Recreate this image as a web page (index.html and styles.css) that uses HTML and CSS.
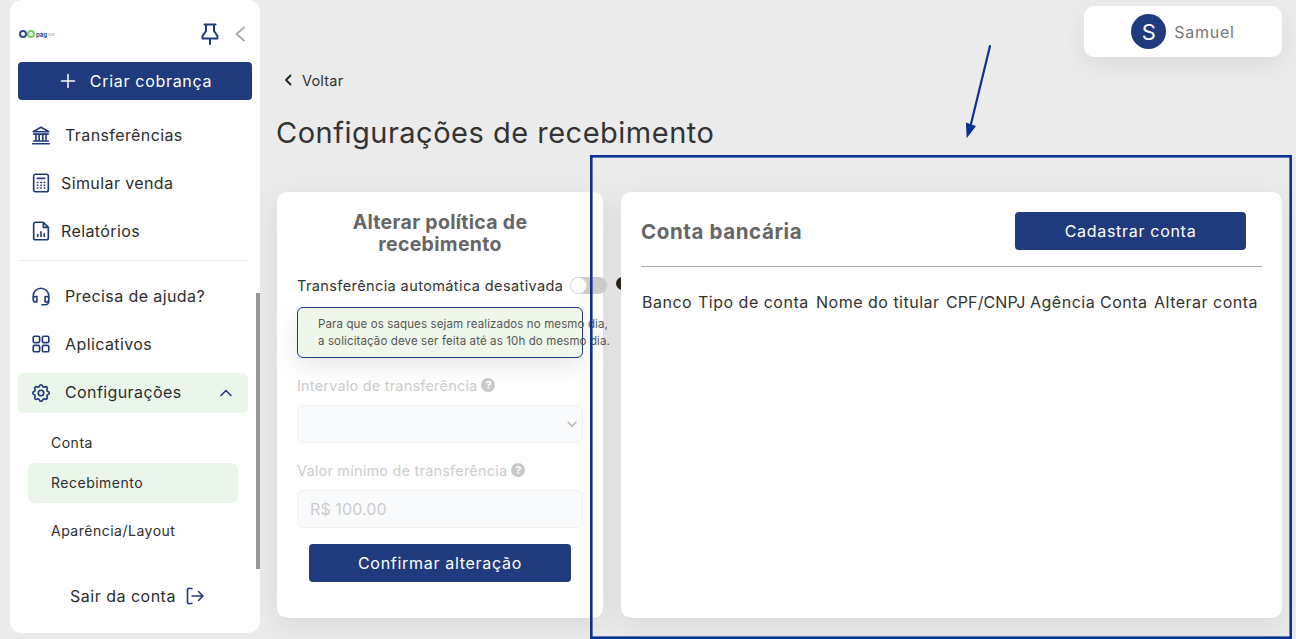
FILE: index.html
```html
<!DOCTYPE html>
<html lang="pt-BR">
<head>
    <meta charset="UTF-8">
    <meta name="viewport" content="width=device-width, initial-scale=1.0">
    <title>Configurações de recebimento</title>
    <link rel="stylesheet" href="styles.css">
</head>
<body>
    <div class="page">
        <aside class="sidebar">
            <div class="side-top">
                <div class="logo"><span class="logo-go"></span><span class="logo-go green"></span><span class="logo-text">pag</span><span class="logo-line"></span></div>
                <svg class="pin" viewBox="0 0 18 22" width="18" height="22"><path d="M3.500 1.500h11M5 1.500v6.500L1.500 13v2.500h15V13L13 8V1.500M9 15.500V21" /></svg>
                <svg class="collapse" viewBox="0 0 12 16" width="12" height="16"><path d="M11 1.500L3.500 8l7.500 6.500" /></svg>
            </div>
            <button class="btn create-btn" type="button">
                <svg viewBox="0 0 16 16" width="16" height="16"><path d="M8 1.500v13M1.500 8h13" /></svg>
                Criar cobrança
            </button>
            <nav class="side-nav">
                <a class="nav-item">
                    <svg class="nav-icon" viewBox="0 0 24 24"><path d="M3.500 8.500L12 3.500l8.500 5zM4 11h16M6.500 11v7M10 11v7M14 11v7M17.500 11v7M4 18.500h16M3 21.500h18" /></svg>
                    <span>Transferências</span>
                </a>
                <a class="nav-item">
                    <svg class="nav-icon tight" viewBox="0 0 24 24"><rect x="4" y="2.500" width="16" height="19" rx="2" /><path d="M8 7h8M8 11.500h.5M11.800 11.500h.5M15.500 11.500h.5M8 14.500h.5M11.800 14.500h.5M15.500 14.500h.5M8 17.500h.5M11.800 17.500h.5M15.500 17.500h.5" /></svg>
                    <span>Simular venda</span>
                </a>
                <a class="nav-item">
                    <svg class="nav-icon tight" viewBox="0 0 24 24"><path d="M14.500 2.500H6a2 2 0 0 0-2 2v15a2 2 0 0 0 2 2h12a2 2 0 0 0 2-2V8zM14.500 2.500V8H20M8.500 18v-2M12 18v-5M15.500 18v-3" /></svg>
                    <span>Relatórios</span>
                </a>
                <hr class="side-line">
                <a class="nav-item">
                    <svg class="nav-icon" viewBox="0 0 24 24"><path d="M3.500 15v-3a8.500 8.500 0 0 1 17 0v3M3.500 15a2.500 2.500 0 0 1 2.500-2.500h1.500v6H6A2.500 2.500 0 0 1 3.500 16zM20.500 15a2.500 2.500 0 0 0-2.500-2.500h-1.500v6H18a2.500 2.500 0 0 0 2.500-2.500zM20.500 16v2a3.500 3.500 0 0 1-3.500 3.500h-4" /></svg>
                    <span>Precisa de ajuda?</span>
                </a>
                <a class="nav-item">
                    <svg class="nav-icon" viewBox="0 0 24 24"><rect x="3.500" y="3.500" width="7" height="7" rx="1.500" /><rect x="13.500" y="3.500" width="7" height="7" rx="1.500" /><rect x="3.500" y="13.500" width="7" height="7" rx="1.500" /><rect x="13.500" y="13.500" width="7" height="7" rx="1.500" /></svg>
                    <span>Aplicativos</span>
                </a>
                <a class="nav-item nav-open">
                    <svg class="nav-icon" viewBox="0 0 24 24"><path d="M10.325 4.317c.426 -1.756 2.924 -1.756 3.35 0a1.724 1.724 0 0 0 2.573 1.066c1.543 -.94 3.31 .826 2.37 2.37a1.724 1.724 0 0 0 1.065 2.572c1.756 .426 1.756 2.924 0 3.35a1.724 1.724 0 0 0 -1.066 2.573c.94 1.543 -.826 3.31 -2.37 2.37a1.724 1.724 0 0 0 -2.572 1.065c-.426 1.756 -2.924 1.756 -3.35 0a1.724 1.724 0 0 0 -2.573 -1.066c-1.543 .94 -3.31 -.826 -2.37 -2.37a1.724 1.724 0 0 0 -1.065 -2.572c-1.756 -.426 -1.756 -2.924 0 -3.35a1.724 1.724 0 0 0 1.066 -2.573c-.94 -1.543 .826 -3.31 2.37 -2.37c1 .608 2.296 .07 2.572 -1.065z" /><circle cx="12" cy="12" r="3" /></svg>
                    <span>Configurações</span>
                    <svg class="open-arrow" viewBox="0 0 14 10" width="14" height="10"><path d="M2 7.500l5-5 5 5" /></svg>
                </a>
                <div class="sub-nav">
                    <a class="sub-item">Conta</a>
                    <a class="sub-item active">Recebimento</a>
                    <a class="sub-item last">Aparência/Layout</a>
                </div>
            </nav>
            <a class="logout">
                Sair da conta
                <svg viewBox="0 0 20 20" width="20" height="20"><path d="M7 2.500H3.500a1 1 0 0 0-1 1v13a1 1 0 0 0 1 1H7M7 10h11M13.500 5.500L18 10l-4.500 4.500" /></svg>
            </a>
            <div class="side-scroll"></div>
        </aside>

        <main class="content">
            <div class="top-bar">
                <div class="user-card">
                    <span class="avatar">S</span>
                    <span class="user-name">Samuel</span>
                </div>
            </div>
            <a class="back">
                <svg viewBox="0 0 10 12" width="10" height="12"><path d="M7.500 1.500L3 6l4.500 4.500" /></svg>
                Voltar
            </a>
            <h1 class="page-title">Configurações de recebimento</h1>

            <div class="cards">
                <section class="card policy-card">
                    <h2 class="policy-title">Alterar política de recebimento</h2>
                    <div class="toggle-row">
                        <span>Transferência automática desativada</span>
                        <span class="toggle"><span class="knob"></span></span>
                        <span class="dark-dot"></span>
                    </div>
                    <div class="notice">
                        <p>Para que os saques sejam realizados no mesmo dia,</p>
                        <p>a solicitação deve ser feita até as 10h do mesmo dia.</p>
                    </div>
                    <label class="field-label">Intervalo de transferência <span class="help">?</span></label>
                    <div class="fake-field">
                        <svg viewBox="0 0 12 8" width="10" height="7"><path d="M1.500 1.500L6 6l4.500-4.500" /></svg>
                    </div>
                    <label class="field-label">Valor mínimo de transferência <span class="help">?</span></label>
                    <div class="fake-field">R$ 100.00</div>
                    <button class="btn confirm-btn" type="button">Confirmar alteração</button>
                </section>

                <section class="card bank-card">
                    <div class="bank-head">
                        <h2 class="bank-title">Conta bancária</h2>
                        <button class="btn add-btn" type="button">Cadastrar conta</button>
                    </div>
                    <div class="bank-cols">
                        <span>Banco</span>
                        <span>Tipo de conta</span>
                        <span>Nome do titular</span>
                        <span class="col-doc">CPF/CNPJ</span>
                        <span>Agência</span>
                        <span>Conta</span>
                        <span>Alterar conta</span>
                    </div>
                </section>
            </div>
        </main>
    </div>

    <!-- marcação por cima da captura -->
    <svg class="mark" viewBox="0 0 1296 639" width="1296" height="639">
        <rect x="591.300" y="156.300" width="699.400" height="481.400" />
        <path class="shaft" d="M990 46L971 124" />
        <path class="head" d="M966.700 138.300L965.900 122.600L976 126z" />
    </svg>
</body>
</html>
```

FILE: styles.css
```css
* {
    box-sizing: border-box;
}
body {
    margin: 0;
    height: 639px;
    overflow: hidden;
    background-color: #ebebeb;
    font-family: Inter, "Open Sans", sans-serif;
    color: #333;
}
p, h1, h2 {
    margin: 0;
}
svg path, svg rect, svg circle {
    fill: none;
    stroke-linecap: round;
    stroke-linejoin: round;
}
.page {
    display: flex;
    height: 639px;
}

/* sidebar */
.sidebar {
    position: relative;
    flex: none;
    width: 250px;
    height: 633px;
    margin-left: 10px;
    padding: 0 8px;
    background-color: #fff;
    border-radius: 12px;
}
.side-top {
    display: flex;
    align-items: center;
    height: 62px;
    padding: 6px 0 0 1px;
}
.logo {
    display: flex;
    align-items: center;
    width: 182px;
}
.logo-go {
    width: 8px;
    height: 8px;
    border: 2px solid #2f4b8f;
    border-radius: 50%;
}
.logo-go.green {
    border-color: #6fcf5f;
    margin-right: 1px;
}
.logo-text {
    font-size: 6px;
    font-weight: 700;
    color: #2f4b8f;
    margin-right: 1px;
}
.logo-line {
    width: 7px;
    height: 3px;
    background-color: #d5d8e2;
}
.pin path {
    stroke: #1f3a7d;
    stroke-width: 2;
}
.collapse {
    margin-left: 14px;
}
.collapse path {
    stroke: #aaa;
    stroke-width: 1.800;
}
.btn {
    display: flex;
    align-items: center;
    justify-content: center;
    height: 38px;
    border: none;
    border-radius: 4px;
    background-color: #1f3a7d;
    color: #fff;
    font-family: inherit;
    font-size: 16px;
    letter-spacing: 0.7px;
    cursor: pointer;
}
.create-btn {
    width: 234px;
    gap: 14px;
    padding-left: 8px;
}
.create-btn path {
    stroke: #fff;
    stroke-width: 1.500;
}
.side-nav {
    width: 230px;
    margin-top: 11px;
}
.nav-item {
    display: flex;
    align-items: center;
    height: 48px;
    padding-left: 12px;
    font-size: 16px;
    letter-spacing: 0.4px;
    color: #2d2d2d;
}
.nav-icon {
    flex: none;
    width: 22px;
    height: 22px;
    margin-right: 13px;
}
.nav-icon.tight {
    margin-right: 9px;
}
.nav-icon path, .nav-icon rect, .nav-icon circle {
    stroke: #1f3a7d;
    stroke-width: 1.800;
}
.side-line {
    height: 1px;
    margin: 5px 0 11px;
    border: none;
    background-color: #ececec;
}
.nav-open {
    position: relative;
    height: 40px;
    margin-top: 5px;
    padding-bottom: 2px;
    border-radius: 6px;
    background-color: #ebf6ea;
}
.nav-open .nav-icon {
    margin-bottom: -2px;
}
.open-arrow {
    position: absolute;
    right: 15px;
    top: 15px;
}
.open-arrow path {
    stroke: #1f3a7d;
    stroke-width: 1.500;
}
.sub-nav {
    padding: 10px 10px 0;
}
.sub-item {
    display: flex;
    align-items: center;
    height: 40px;
    padding: 0 0 2px 23px;
    font-size: 14px;
    letter-spacing: 0.5px;
    color: #2d2d2d;
    border-radius: 6px;
}
.sub-item.active {
    background-color: #ebf6ea;
}
.sub-item.last {
    margin-top: 8px;
}
.logout {
    position: absolute;
    left: 60px;
    top: 586px;
    display: flex;
    align-items: center;
    gap: 9px;
    font-size: 16px;
    letter-spacing: 0.5px;
    color: #2d2d2d;
}
.logout path {
    stroke: #1f3a7d;
    stroke-width: 1.600;
}
.side-scroll {
    position: absolute;
    right: 0;
    top: 293px;
    width: 4px;
    height: 276px;
    background-color: #999;
}

/* conteudo */
.content {
    flex: 1;
    min-width: 0;
    padding: 0 14px 0 16px;
}
.top-bar {
    display: flex;
    justify-content: flex-end;
    padding-top: 6px;
}
.user-card {
    display: flex;
    align-items: center;
    justify-content: center;
    gap: 8px;
    width: 198px;
    height: 51px;
    background-color: #fff;
    border-radius: 10px;
    box-shadow: 0 8px 24px rgba(0,0,0,0.07);
}
.avatar {
    display: flex;
    align-items: center;
    justify-content: center;
    width: 35px;
    height: 35px;
    border-radius: 50%;
    background-color: #1f3a7d;
    color: #fff;
    font-size: 22px;
}
.user-name {
    font-size: 16px;
    letter-spacing: 0.75px;
    color: #777;
}
.back {
    display: flex;
    align-items: center;
    gap: 9px;
    height: 20px;
    margin: 13px 0 0 7px;
    font-size: 14.500px;
    letter-spacing: 0.2px;
    color: #333;
}
.back path {
    stroke: #222;
    stroke-width: 1.800;
}
.page-title {
    height: 42px;
    margin-top: 22px;
    font-size: 29px;
    font-weight: 400;
    line-height: 42px;
    letter-spacing: 0.5px;
    color: #333;
}
.cards {
    display: flex;
    gap: 18px;
    height: 426px;
    margin: 38px 0 0 1px;
}
.card {
    position: relative;
    background-color: #fff;
    border-radius: 10px;
    box-shadow: 0 8px 30px rgba(0,0,0,0.08);
}

/* politica */
.policy-card {
    flex: none;
    width: 326px;
    padding: 19px 20px 0;
}
.policy-title {
    width: 260px;
    margin: 0 auto;
    font-size: 19.500px;
    font-weight: 700;
    line-height: 22px;
    letter-spacing: 0.3px;
    text-align: center;
    color: #666;
}
.toggle-row {
    display: flex;
    align-items: center;
    height: 20px;
    margin-top: 21px;
    padding-bottom: 2px;
    font-size: 14.500px;
    letter-spacing: 0.4px;
    white-space: nowrap;
    color: #333;
}
.toggle {
    flex: none;
    display: block;
    width: 37px;
    height: 17px;
    margin-left: auto;
    margin-right: -26px;
    border-radius: 9px;
    background-color: #ccc;
}
.knob {
    display: block;
    width: 17px;
    height: 17px;
    border: 1px solid #ddd;
    border-radius: 50%;
    background-color: #fff;
}
.dark-dot {
    flex: none;
    width: 13px;
    height: 13px;
    margin: 0 -46px 3px 35px;
    border-radius: 50%;
    background-color: #2a2416;
}
.notice {
    height: 51px;
    margin-top: 11px;
    padding: 8px 0 0 20px;
    border: 1px solid #1f3a7d;
    border-radius: 6px;
    background-color: #eef7ea;
    box-shadow: 0 8px 24px rgba(0,0,0,0.1);
    font-size: 11.500px;
    line-height: 17px;
    letter-spacing: 0.12px;
    white-space: nowrap;
    color: #555;
}
.field-label {
    display: flex;
    align-items: center;
    gap: 4px;
    height: 20px;
    margin-top: 18px;
    padding-bottom: 2px;
    font-size: 14.500px;
    letter-spacing: 0.2px;
    color: #ccc;
}
.help {
    display: flex;
    align-items: center;
    justify-content: center;
    width: 14px;
    height: 14px;
    border-radius: 50%;
    background-color: #c8c8c8;
    color: #fff;
    font-size: 11px;
    font-weight: 700;
    letter-spacing: 0;
}
.fake-field {
    display: flex;
    align-items: center;
    justify-content: space-between;
    height: 38px;
    margin-top: 9px;
    padding: 0 5px 0 12px;
    border: 1px solid #f0f0f0;
    border-radius: 6px;
    background-color: #f9fafb;
    font-size: 16px;
    letter-spacing: 0.1px;
    color: #ccc;
}
.fake-field svg {
    margin-left: auto;
}
.fake-field path {
    stroke: #bbb;
    stroke-width: 2;
}
.confirm-btn {
    width: 262px;
    margin: 16px 0 0 12px;
    padding-bottom: 2px;
}

/* conta */
.bank-card {
    flex: 1;
    min-width: 0;
    padding: 20px 20px 0;
}
.bank-head {
    display: flex;
    align-items: center;
    justify-content: space-between;
    padding-bottom: 16px;
    border-bottom: 1px solid #aaa;
}
.bank-title {
    font-size: 20.500px;
    font-weight: 700;
    letter-spacing: 0.6px;
    color: #666;
}
.add-btn {
    width: 231px;
    margin-right: 16px;
    padding-bottom: 2px;
}
.bank-cols {
    display: grid;
    grid-template-columns: 56px 118px 130px 84px 70px 54px auto;
    height: 20px;
    margin: 25px 0 0 1px;
    font-size: 16px;
    letter-spacing: 0.5px;
    line-height: 20px;
    white-space: nowrap;
    color: #333;
}
.col-doc {
    letter-spacing: 0.1px;
}

/* anotacao */
.mark {
    position: absolute;
    left: 0;
    top: 0;
}
.mark rect {
    stroke: #0b3293;
    stroke-width: 2.600;
    stroke-linejoin: miter;
}
.mark .shaft {
    stroke: #0b3293;
    stroke-width: 2.200;
}
.mark .head {
    fill: #0b3293;
    stroke: none;
}
```
